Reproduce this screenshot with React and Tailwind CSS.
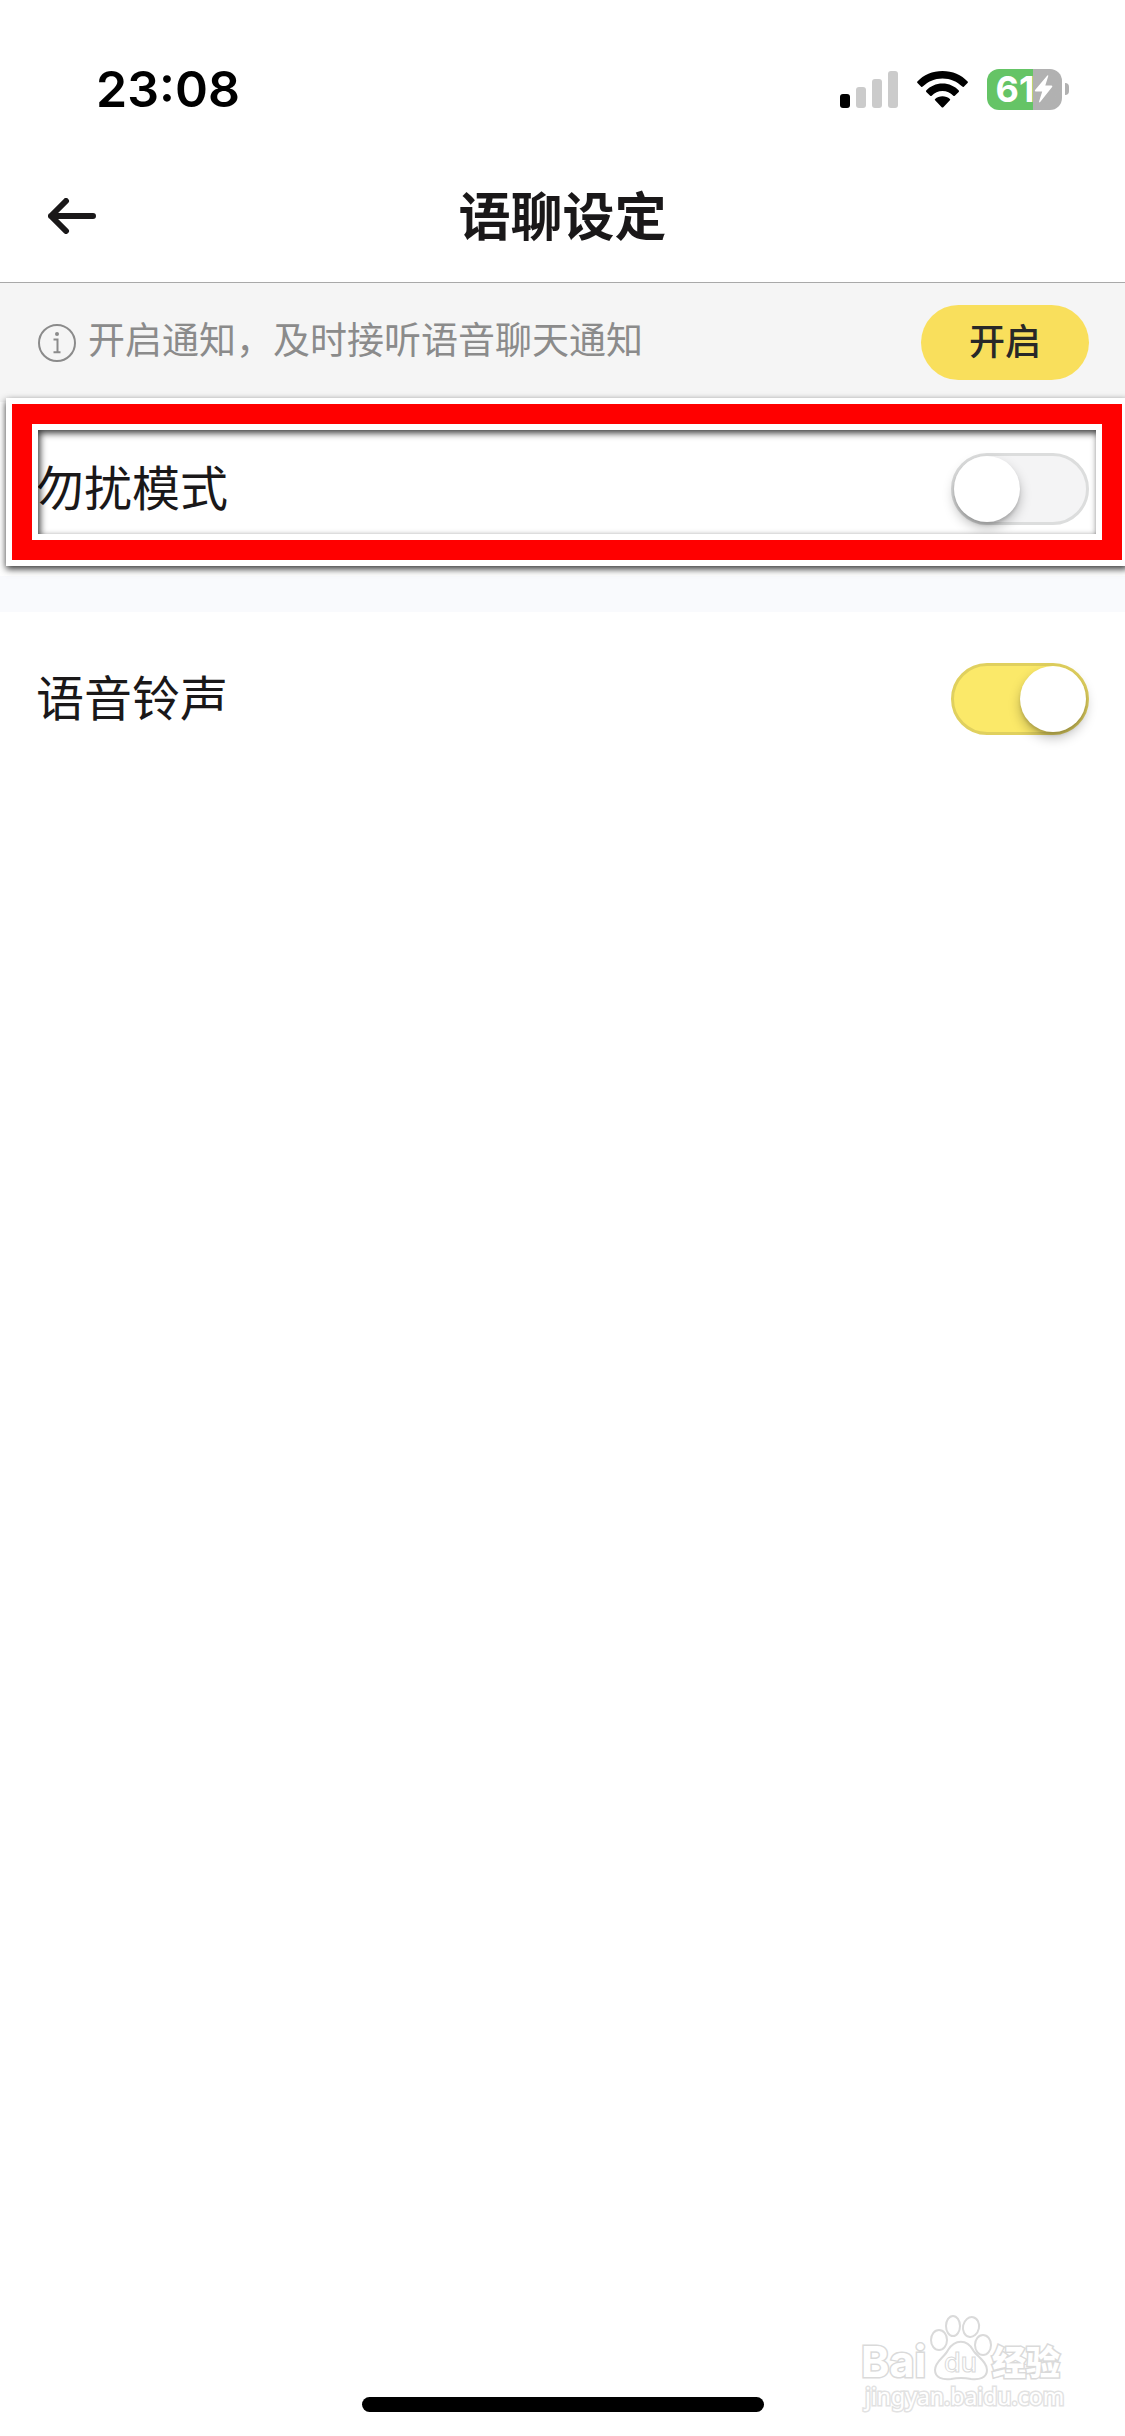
import React, { useState } from "react";

function SignalIcon() {
    return (
        <svg width="58" height="37" viewBox="0 0 58 37" aria-hidden="true">
            <rect x="0" y="23" width="10" height="14" rx="3" fill="#000" />
            <rect x="16" y="16" width="10" height="21" rx="3" fill="#cbcbcb" />
            <rect x="32" y="8" width="10" height="29" rx="3" fill="#cbcbcb" />
            <rect x="48" y="0" width="10" height="37" rx="3" fill="#cbcbcb" />
        </svg>
    );
}

function WifiIcon() {
    return (
        <svg width="51" height="37" viewBox="0 0 51 37" aria-hidden="true">
            <path d="M25.5 0C35.500 0 44.500 4 50.600 10.500Q51.200 11.300 50.500 12L46.800 15.700Q46 16.300 45.300 15.600C40.200 10.500 33.300 7.400 25.500 7.400S10.800 10.500 5.700 15.600Q5 16.300 4.200 15.700L.5 12Q-.2 11.300 .4 10.500C6.500 4 15.500 0 25.500 0Z" />
            <path d="M25.500 12.500C32 12.500 37.800 15.200 41.800 19.500Q42.400 20.300 41.700 21L37.800 24.800Q37 25.400 36.300 24.700C33.500 21.900 29.700 20.100 25.500 20.100S17.500 21.900 14.700 24.700Q14 25.400 13.200 24.800L9.300 21Q8.600 20.300 9.200 19.500C13.200 15.200 19 12.500 25.500 12.500Z" />
            <path d="M25.500 25.200C28.300 25.200 31 26.200 32.900 27.900Q33.600 28.600 32.900 29.300L26.300 36.200Q25.500 37 24.700 36.200L18.100 29.300Q17.400 28.600 18.100 27.900C20 26.200 22.700 25.200 25.500 25.200Z" />
        </svg>
    );
}

function Battery() {
    return (
        <div className="flex items-center gap-[3px]">
            <div className="flex h-[41px] w-[75px] items-center justify-center rounded-[12px] bg-linear-to-r from-[#65c466] from-[46px] to-[#b1b1b1] to-[46px] text-white">
                <span className="text-[36px] leading-none font-bold">61</span>
                <svg width="19" height="28" viewBox="0 0 19 28" aria-hidden="true">
                    <path
                        d="M13.300 .6Q14.600 -.4 14.200 1.300L11.300 10.600H17.300Q19 10.800 17.900 12.300L6.200 26.900Q4.700 28.200 5.200 26.100L8.200 16.500H1.800Q.2 16.100 1.300 14.700Z"
                        fill="#fff"
                    />
                </svg>
            </div>
            <div className="h-3 w-1 rounded-r-full bg-[#b1b1b1]" />
        </div>
    );
}

function StatusBar() {
    return (
        <div className="flex h-[150px] items-center justify-between pt-7 pr-14 pl-24 font-['Inter',sans-serif]">
            <span className="text-[50px] leading-none font-semibold text-black">
                23:08
            </span>
            <div className="flex items-center gap-[19px]">
                <SignalIcon />
                <WifiIcon />
                <Battery />
            </div>
        </div>
    );
}

function Header() {
    return (
        <header className="grid h-[133px] grid-cols-[1fr_auto_1fr] items-center border-b border-[#a9a9a9] px-12">
            <button type="button" aria-label="返回" className="justify-self-start">
                <svg
                    width="48"
                    height="36"
                    viewBox="0 0 48 36"
                    fill="none"
                    stroke="#1a1819"
                    strokeWidth="6"
                    strokeLinecap="round"
                    strokeLinejoin="round"
                >
                    <path d="M18 3L3 18L18 33M3 18H45" />
                </svg>
            </button>
            <h1 className="pb-1 text-[52px] leading-none font-bold">语聊设定</h1>
        </header>
    );
}

function Notice() {
    return (
        <section className="flex h-[119px] items-center justify-between bg-[#f5f5f5] pr-9 pl-[38px]">
            <div className="flex items-center gap-3 text-[#8b8b8b]">
                <svg
                    width="38"
                    height="38"
                    viewBox="0 0 38 38"
                    fill="none"
                    stroke="currentColor"
                    strokeWidth="2"
                    aria-hidden="true"
                >
                    <circle cx="19" cy="19" r="18" />
                    <path d="M15.500 15.500H19.500V28.300M15.500 28.300H22.500" />
                    <circle cx="19" cy="10" r="2" fill="currentColor" stroke="none" />
                </svg>
                <p className="pb-2 text-[37px] leading-none font-normal">
                    开启通知，及时接听语音聊天通知
                </p>
            </div>
            <button
                type="button"
                className="h-[75px] w-[168px] rounded-full bg-[#f9df5c] pb-2 text-[36px] leading-none font-medium text-[#282828]"
            >
                开启
            </button>
        </section>
    );
}

function SettingRow({ id, label, defaultOn = false }) {
    const [on, setOn] = useState(defaultOn);

    return (
        <div className="flex h-[174px] items-center justify-between bg-white px-9">
            <label htmlFor={id} className="pb-2 text-[48px] leading-none">
                {label}
            </label>
            <input
                id={id}
                type="checkbox"
                role="switch"
                checked={on}
                onChange={(e) => setOn(e.target.checked)}
                className="flex h-[72px] w-[138px] cursor-pointer appearance-none rounded-full border-3 border-[#dcdddd] bg-[#f4f4f5] before:size-[66px] before:rounded-full before:bg-white before:shadow-[0_6px_12px_rgba(0,0,0,0.25),0_3px_3px_rgba(0,0,0,0.12)] before:content-[''] checked:justify-end checked:border-[#e0d05e] checked:bg-[#fbe969]"
            />
        </div>
    );
}

// Red frame laid over a row to point it out
function Highlight() {
    return (
        <div className="pointer-events-none absolute -top-1 -right-[3px] bottom-[10px] left-[6px] border-6 border-white shadow-[0_3px_7px_rgba(0,0,0,0.8)]">
            <div className="h-full border-20 border-[#ff0000]">
                <div className="h-full border-6 border-white shadow-[inset_2px_3px_7px_rgba(0,0,0,0.8)]" />
            </div>
        </div>
    );
}

function Watermark() {
    return (
        <svg
            className="absolute right-14 bottom-4"
            width="209"
            height="108"
            viewBox="0 0 209 108"
            fill="#fff"
            stroke="#dadada"
            strokeWidth="2"
            aria-label="Baidu 经验"
        >
            <g fontFamily="Inter, 'Noto Sans CJK SC', sans-serif" paintOrder="stroke">
                <text x="1" y="65" fontSize="43" fontWeight="700" strokeWidth="3">
                    Bai
                </text>
                <text x="132" y="63" fontSize="34" fontWeight="900" strokeWidth="3">
                    经验
                </text>
            </g>
            <ellipse cx="79" cy="28" rx="8" ry="10" />
            <ellipse cx="93" cy="14" rx="7" ry="10" />
            <ellipse cx="111" cy="15" rx="8" ry="10" transform="rotate(12 111 15)" />
            <ellipse cx="123" cy="33" rx="8" ry="10" />
            <path d="M88 38C95 27 107 27 113 38C116 44 127 49 127 58C127 66 119 68 111 67Q101 65 91 67C83 68 75 66 75 58C75 49 85 45 88 38Z" />
            <text x="84" y="60" fontSize="27" fontWeight="500" fontFamily="Inter, sans-serif" strokeWidth="1">
                du
            </text>
            <text x="5" y="93" fontSize="23" fontFamily="'Noto Sans', sans-serif" stroke="#e2e2e2" strokeWidth="3" paintOrder="stroke">
                jingyan.baidu.com
            </text>
        </svg>
    );
}

export default function App() {
    return (
        <div className="relative flex min-h-screen flex-col overflow-hidden bg-white font-['Noto_Sans_CJK_SC',sans-serif] text-[#1a1819]">
            <StatusBar />
            <Header />
            <Notice />
            <main>
                <div className="relative">
                    <SettingRow id="dnd" label="勿扰模式" />
                    <Highlight />
                </div>
                <div className="h-9 bg-[#f9fafd]" />
                <SettingRow id="ringtone" label="语音铃声" defaultOn />
            </main>
            <div className="mx-auto mt-auto mb-6 h-[15px] w-[402px] rounded-full bg-black" />
            <Watermark />
        </div>
    );
}
